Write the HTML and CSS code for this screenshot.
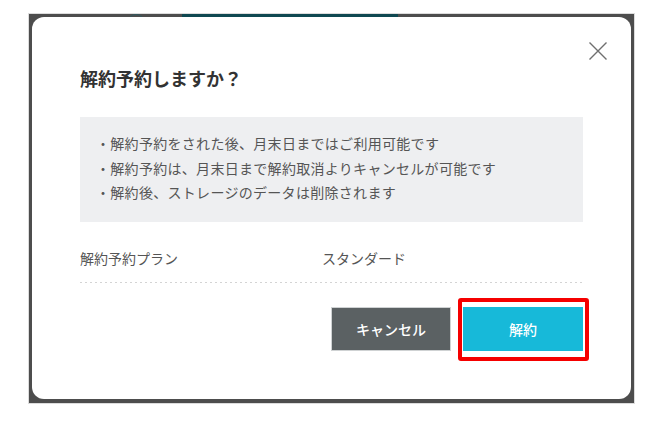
FILE: index.html
```html
<!DOCTYPE html>
<html lang="ja">

<head>
    <meta charset="UTF-8" />
    <meta name="viewport" content="width=device-width, initial-scale=1.0" />
    <title>解約予約</title>
    <link rel="stylesheet" href="styles.css">
</head>

<body>
    <div class="overlay">
        <div class="page-behind">
            <span class="page-avatar"></span>
            <span class="page-tab"></span>
        </div>

        <div class="modal">
            <button class="modal-close" aria-label="閉じる">
                <svg width="20" height="20" viewBox="0 0 20 20">
                    <path d="M1.5 1.5 L18.5 18.5 M18.5 1.5 L1.5 18.5" stroke="#6f6f6f" stroke-width="1.4" fill="none" />
                </svg>
            </button>

            <h1 class="modal-title">解約予約しますか？</h1>

            <ul class="notice">
                <li>・解約予約をされた後、月末日まではご利用可能です</li>
                <li>・解約予約は、月末日まで解約取消よりキャンセルが可能です</li>
                <li>・解約後、ストレージのデータは削除されます</li>
            </ul>

            <div class="plan-row">
                <span>解約予約プラン</span>
                <span>スタンダード</span>
            </div>

            <div class="actions">
                <button class="btn btn-cancel">キャンセル</button>
                <div class="btn-wrap">
                    <button class="btn btn-confirm">解約</button>
                    <span class="highlight"></span>
                </div>
            </div>
        </div>
    </div>
</body>

</html>
```

FILE: styles.css
```css
body {
    margin: 0;
    padding: 0;
    background-color: #fff;
    font-family: "Noto Sans CJK JP", "Noto Sans", sans-serif;
}

.overlay {
    position: relative;
    box-sizing: border-box;
    width: 607px;
    height: 391px;
    margin: 13px 0 0 28px;
    padding: 3px 3px 4px 3px;
    background-color: #4d4d4d;
    border: 1px solid #dcdcdc;
    overflow: hidden;
}

.page-behind {
    position: absolute;
    top: 0;
    left: 0;
    right: 0;
    height: 10px;
}

.page-avatar {
    position: absolute;
    left: 98px;
    top: 0;
    width: 16px;
    height: 16px;
    border-radius: 50%;
    border: 1px solid #2f5a60;
}

.page-tab {
    position: absolute;
    left: 153px;
    top: 0;
    width: 216px;
    height: 8px;
    background-color: #0f4851;
}

.modal {
    position: relative;
    box-sizing: border-box;
    width: 599px;
    height: 382px;
    padding: 49px 48px 48px 48px;
    background-color: #fff;
    border-radius: 12px;
}

.modal-close {
    position: absolute;
    left: 556px;
    top: 24px;
    width: 20px;
    height: 20px;
    padding: 0;
    border: none;
    background: none;
}

.modal-close svg {
    display: block;
}

.modal-title {
    margin: 0;
    font-size: 18px;
    line-height: 24px;
    font-weight: 700;
    color: #333;
}

.notice {
    list-style: none;
    margin: 27px 0 0 0;
    padding: 14px 0 17px 16px;
    height: 105px;
    box-sizing: border-box;
    background-color: #eeeff1;
    font-size: 14px;
    line-height: 24.5px;
    letter-spacing: 0.3px;
    color: #555;
}

.plan-row {
    display: grid;
    grid-template-columns: 242px 1fr;
    margin-top: 24px;
    padding-bottom: 12px;
    height: 25px;
    box-sizing: content-box;
    font-size: 14px;
    line-height: 24px;
    color: #555;
    border-bottom: 1px dotted transparent;
    background-image: linear-gradient(to right, #d4d4d4 2px, transparent 2px);
    background-size: 5px 1px;
    background-repeat: repeat-x;
    background-position: left bottom;
}

.actions {
    display: flex;
    justify-content: flex-end;
    gap: 12px;
    margin-top: 23px;
}

.btn {
    width: 120px;
    height: 44px;
    border: none;
    border-radius: 0;
    padding: 0;
    font-family: "Noto Sans CJK JP", "Noto Sans", sans-serif;
    font-size: 14px;
    font-weight: 500;
    color: #fff;
}

.btn-cancel {
    background-color: #5b6163;
    border: 1px solid #cfd2d3;
}

.btn-confirm {
    background-color: #17b9d9;
}

.btn-wrap {
    position: relative;
    display: flex;
}

.highlight {
    position: absolute;
    left: -5px;
    top: -9px;
    right: -6px;
    bottom: -10px;
    border: 4px solid #f50000;
    border-radius: 3px;
}
```
